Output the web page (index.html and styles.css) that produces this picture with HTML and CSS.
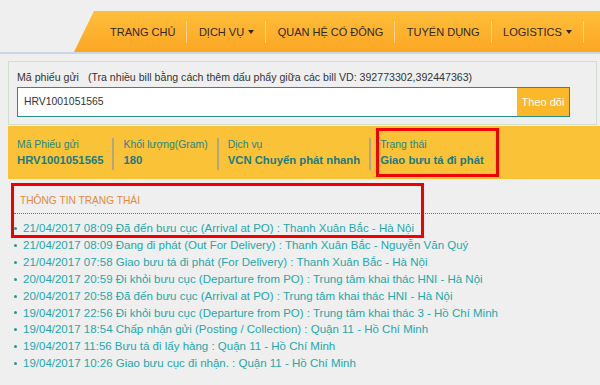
FILE: index.html
```html
<!DOCTYPE html>
<html lang="vi">
<head>
<meta charset="utf-8">
<title>Tra cứu bưu phẩm</title>
<link rel="stylesheet" href="styles.css">
</head>
<body>
<header class="header">
  <nav class="nav">
    <a class="nav-item">TRANG CHỦ</a>
    <a class="nav-item">DỊCH VỤ <span class="caret"></span></a>
    <a class="nav-item">QUAN HỆ CỔ ĐÔNG</a>
    <a class="nav-item">TUYỂN DỤNG</a>
    <a class="nav-item">LOGISTICS <span class="caret"></span></a>
  </nav>
</header>
<div class="topline"></div>
<main class="main">
  <section class="search">
    <div class="search-label">Mã phiếu gửi<span class="hint">(Tra nhiều bill bằng cách thêm dấu phẩy giữa các bill VD: 392773302,392447363)</span></div>
    <div class="search-box">
      <div class="search-input">HRV1001051565</div>
      <div class="search-btn">Theo dõi</div>
    </div>
  </section>
  <section class="info">
    <div class="info-col">
      <div class="info-label">Mã Phiếu gửi</div>
      <div class="info-value">HRV1001051565</div>
    </div>
    <div class="info-col">
      <div class="info-label">Khối lượng(Gram)</div>
      <div class="info-value">180</div>
    </div>
    <div class="info-col">
      <div class="info-label">Dịch vụ</div>
      <div class="info-value">VCN Chuyển phát nhanh</div>
    </div>
    <div class="info-col">
      <div class="info-label">Trạng thái</div>
      <div class="info-value">Giao bưu tá đi phát</div>
    </div>
  </section>
  <section class="status">
    <h2 class="status-title">THÔNG TIN TRẠNG THÁI</h2>
    <ul class="status-list">
      <li>21/04/2017 08:09 Đã đến bưu cục (Arrival at PO) : Thanh Xuân Bắc - Hà Nội</li>
      <li>21/04/2017 08:09 Đang đi phát (Out For Delivery) : Thanh Xuân Bắc - Nguyễn Văn Quý</li>
      <li>21/04/2017 07:58 Giao bưu tá đi phát (For Delivery) : Thanh Xuân Bắc - Hà Nội</li>
      <li>20/04/2017 20:59 Đi khỏi bưu cục (Departure from PO) : Trung tâm khai thác HNI - Hà Nội</li>
      <li>20/04/2017 20:58 Đã đến bưu cục (Arrival at PO) : Trung tâm khai thác HNI - Hà Nội</li>
      <li>19/04/2017 22:56 Đi khỏi bưu cục (Departure from PO) : Trung tâm khai thác 3 - Hồ Chí Minh</li>
      <li>19/04/2017 18:54 Chấp nhận gửi (Posting / Collection) : Quận 11 - Hồ Chí Minh</li>
      <li>19/04/2017 11:56 Bưu tá đi lấy hàng : Quận 11 - Hồ Chí Minh</li>
      <li>19/04/2017 10:26 Giao bưu cục đi nhận. : Quận 11 - Hồ Chí Minh</li>
    </ul>
  </section>
</main>
<div class="mark mark-status"></div>
<div class="mark mark-title"></div>
</body>
</html>
```
FILE: styles.css
```css
* { box-sizing: border-box; }
html, body { margin: 0; padding: 0; }
body {
  background: #efefef;
  font-family: "Liberation Sans", Arial, sans-serif;
  width: 600px;
  height: 385px;
  overflow: hidden;
  position: relative;
}
.header {
  padding-top: 11px;
  height: 52px;
}
.nav {
  margin-left: 74px;
  height: 41px;
  padding-left: 24px;
  display: flex;
  align-items: center;
  background: linear-gradient(#ffbe3a, #fca623);
  clip-path: polygon(20px 0, 100% 0, 100% 100%, 0 100%);
}
.nav-item {
  font-size: 11px;
  color: #2d2a26;
  padding: 0 11px 0 12px;
  height: 22px;
  line-height: 22px;
  border-right: 1px solid #ffd98a;
  white-space: nowrap;
  display: flex;
  align-items: center;
  gap: 4px;
}
.nav-item + .nav-item { padding-left: 11.5px; }
.caret {
  width: 0;
  height: 0;
  border-left: 3.5px solid transparent;
  border-right: 3.5px solid transparent;
  border-top: 4px solid #2d2a26;
  margin-top: 1px;
}
.topline {
  height: 2px;
  background: #c9d8e6;
}
.main {
  padding-left: 8px;
  padding-top: 7px;
}
.search {
  margin-right: 3px;
  border: 1px solid #cfdfcf;
  padding: 8px 8px 7px 8px;
}
.search-label {
  font-size: 10.6px;
  color: #333;
  line-height: 14px;
  white-space: nowrap;
}
.hint { margin-left: 9px; }
.search-box {
  margin-top: 3px;
  height: 30px;
  width: 553px;
  border: 1px solid #2b8a8c;
  background: #fff;
  display: flex;
}
.search-input {
  flex: 1;
  font-size: 10.4px;
  color: #333;
  padding-left: 6px;
  line-height: 28px;
}
.search-btn {
  width: 52px;
  background: #fbb829;
  color: #fff;
  font-size: 11px;
  line-height: 28px;
  text-align: center;
}
.info {
  margin-top: 1px;
  height: 53px;
  background: #f9c237;
  display: flex;
  padding-top: 12px;
}
.info-col {
  padding: 0 9px;
  height: 32px;
}
.info-col + .info-col { border-left: 2px solid #b0a58a; }
.info-label {
  font-size: 10.4px;
  color: #2a8585;
  line-height: 15px;
  margin-top: -1px;
}
.info-value {
  font-size: 11.3px;
  font-weight: bold;
  color: #1d7a80;
  line-height: 16px;
  white-space: nowrap;
}
.status {
  padding-left: 6px;
  padding-top: 15px;
}
.status-title {
  margin: 0;
  font-weight: normal;
  font-size: 10.2px;
  color: #e58a3e;
  line-height: 14px;
  padding-left: 6px;
  padding-bottom: 5px;
  border-bottom: 1px dotted #2a8f8f;
}
.status-list {
  list-style: none;
  margin: 0;
  padding: 6px 0 0 0;
}
.status-list li {
  font-size: 11.5px;
  line-height: 16.9px;
  color: #25a8aa;
  white-space: nowrap;
  display: flex;
  align-items: center;
}
.status-list li::before {
  content: "";
  width: 3px;
  height: 3px;
  border-radius: 50%;
  background: #1f9a9c;
  margin-right: 6px;
  flex: none;
}
.mark {
  position: absolute;
  border: 3px solid #f20000;
}
.mark-status { left: 376px; top: 128px; width: 123px; height: 49px; }
.mark-title { left: 11px; top: 183px; width: 413px; height: 55px; }
```
